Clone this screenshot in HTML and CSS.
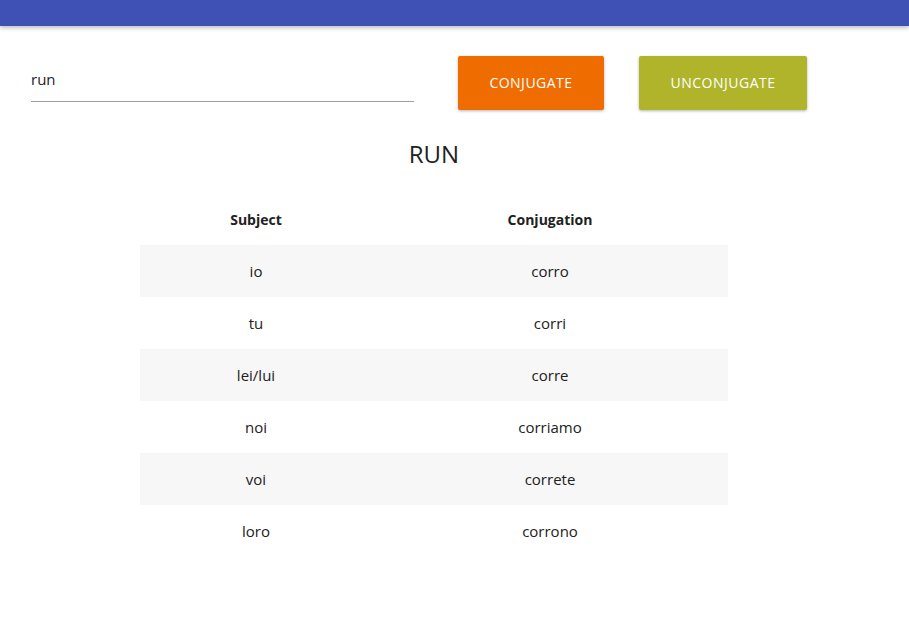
FILE: index.html
```html
<!DOCTYPE html>
<html>
<head>
<meta charset="utf-8">
<link rel="stylesheet" href="styles.css">
</head>
<body>
<header class="appbar"></header>
<main class="page">
  <div class="form-row">
    <div class="field"><input class="field-input" type="text" value="run"></div>
    <button class="btn btn-orange">Conjugate</button>
    <button class="btn btn-lime">Unconjugate</button>
  </div>
  <h1 class="title">RUN</h1>
  <table class="conj">
    <thead>
      <tr><th class="col-subj">Subject</th><th class="col-conj">Conjugation</th></tr>
    </thead>
    <tbody>
      <tr><td>io</td><td>corro</td></tr>
      <tr><td>tu</td><td>corri</td></tr>
      <tr><td>lei/lui</td><td>corre</td></tr>
      <tr><td>noi</td><td>corriamo</td></tr>
      <tr><td>voi</td><td>correte</td></tr>
      <tr><td>loro</td><td>corrono</td></tr>
    </tbody>
  </table>
</main>
</body>
</html>
```
FILE: styles.css
```css
* { box-sizing: border-box; }
html, body { margin: 0; padding: 0; background: #fff; }
body {
  font-family: "Open Sans", "Noto Sans", "Liberation Sans", sans-serif;
  color: #212121;
  font-size: 14px;
}
.appbar {
  height: 26px;
  background: #3f51b5;
  box-shadow: 0 2px 4px rgba(0,0,0,0.25);
}
.page { width: 868px; }
.form-row {
  display: flex;
  align-items: flex-start;
  padding: 30px 0 0 31px;
}
.field {
  width: 383px;
  height: 36px;
  margin-top: 10px;
  border-bottom: 1px solid #9e9e9e;
}
.field-input {
  border: none;
  outline: none;
  background: transparent;
  padding: 0;
  font-family: inherit;
  font-size: 15px;
  color: #212121;
  width: 100%;
  height: 26px;
  margin-top: 0;
}
.btn {
  height: 54px;
  border: none;
  border-radius: 2px;
  color: #fff;
  font-family: inherit;
  font-size: 14px;
  letter-spacing: 0.5px;
  text-transform: uppercase;
  box-shadow: 0 1px 3px rgba(0,0,0,0.3);
  padding: 0 0 2px;
}
.btn-orange { background: #ef6c00; width: 146px; margin-left: 44px; }
.btn-lime { background: #afb42b; width: 168px; margin-left: 35px; }
.title {
  text-align: center;
  font-weight: 400;
  font-size: 24px;
  margin: 28px 0 0;
  line-height: 32px;
  color: #212121;
}
.conj {
  width: 588px;
  margin: 23px auto 0;
  border-collapse: collapse;
  font-size: 15px;
}
.conj th, .conj td {
  height: 52px;
  text-align: center;
  padding: 0;
}
.conj th { font-weight: 700; font-size: 14px; }
.col-subj { width: 232px; }
.col-conj { width: 356px; }
.conj tbody tr:nth-child(odd) { background: #f7f7f7; }
```
